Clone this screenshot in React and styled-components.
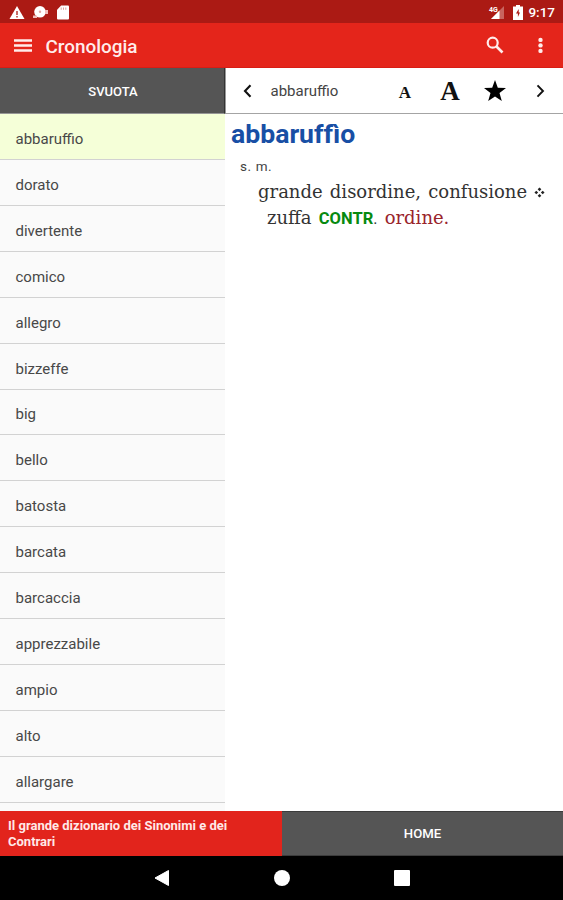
import React, { useState } from 'react';
import styled, { createGlobalStyle } from 'styled-components';

const GlobalStyle = createGlobalStyle`
  * {
    box-sizing: border-box;
  }

  body {
    margin: 0;
    background: #ffffff;
    font-family: Roboto, sans-serif;
  }

  button {
    border: none;
    padding: 0;
    background: none;
    font-family: inherit;
    color: inherit;
    cursor: pointer;
  }

  svg {
    display: block;
  }
`;

// Styled components
const Screen = styled.div`
  width: 563px;
  height: 900px;
  display: flex;
  flex-direction: column;
  overflow: hidden;
`;

const StatusBar = styled.div`
  height: 23px;
  display: flex;
  align-items: center;
  justify-content: space-between;
  padding: 1px 8px 0 9px;
  background-color: #ab1a14;
  color: #ffffff;
`;

const StatusGroup = styled.div`
  display: flex;
  align-items: center;
  gap: ${props => props.$gap}px;
`;

const Clock = styled.span`
  font-size: 13.5px;
  line-height: 22px;
  font-weight: 500;
  margin-left: -3px;
`;

const AppBar = styled.header`
  height: 45px;
  display: flex;
  align-items: center;
  padding: 0 13px 0 14px;
  background-color: #e4251b;
  border-bottom: 1px solid #d81d15;
  color: #ffeceb;
`;

const Title = styled.h1`
  flex: 1;
  margin: 2px 0 0 13.5px;
  font-size: 18.9px;
  font-weight: 500;
`;

const BarButton = styled.button`
  margin-left: ${props => props.$left || 0}px;
`;

const Content = styled.main`
  height: 743px;
  display: flex;
`;

const Sidebar = styled.aside`
  width: 225px;
  background-color: #fafafa;
`;

const ClearButton = styled.button`
  display: block;
  width: 225px;
  height: 46px;
  background-color: #555555;
  border-right: 1px solid #333333;
  border-bottom: 1px solid #969696;
  padding: 2px 0 0 2px;
  color: #ffffff;
  font-size: 13px;
  font-weight: 500;
`;

const WordList = styled.ul`
  list-style: none;
  margin: 0;
  padding: 0;
`;

const WordItem = styled.li`
  height: 45.93px;
  display: flex;
  align-items: center;
  padding: 5px 0 0 15.5px;
  background-color: ${props => (props.$active ? '#f5ffd8' : '#fafafa')};
  border-bottom: 1px solid #d2d2d2;
  color: #484848;
  font-size: 15px;
  cursor: pointer;
`;

const Detail = styled.section`
  flex: 1;
  background-color: #ffffff;
`;

const Toolbar = styled.div`
  height: 46px;
  display: flex;
  align-items: center;
  padding: 0 18px 0 17px;
  border-left: 1px solid #999999;
  border-bottom: 1.5px solid #a4a4a4;
  color: #111111;
`;

const CurrentWord = styled.span`
  flex: 1;
  margin: 1px 0 0 18.5px;
  font-size: 15px;
  color: #444444;
`;

const FontSizeButton = styled.button`
  width: ${props => props.$width}px;
  height: 34px;
  margin-left: ${props => props.$left || 0}px;
  padding-top: ${props => props.$drop || 0}px;
  font-family: 'Liberation Serif', serif;
  font-size: ${props => props.$size}px;
  line-height: 28px;
  font-weight: 700;
`;

const Entry = styled.article`
  padding: 4px 0 0 6px;
`;

const Headword = styled.h2`
  margin: 0;
  font-size: 26.6px;
  line-height: 31px;
  font-weight: 700;
  color: #184fa5;
`;

const Grammar = styled.p`
  margin: 8px 0 0 9px;
  font-size: 13.5px;
  line-height: 18px;
  letter-spacing: 0.6px;
  color: #444444;
`;

const Meaning = styled.p`
  margin: 4px 0 0 36px;
  text-indent: -9px;
  font-family: 'DejaVu Serif', serif;
  font-size: 18px;
  line-height: 26px;
  word-spacing: 1.5px;
  white-space: nowrap;
  color: #333333;
`;

const Diamonds = styled.svg`
  && {
    display: inline-block;
  }
  margin-left: 7px;
`;

const ContraryLabel = styled.span`
  font-family: Roboto, sans-serif;
  font-size: 16.5px;
  font-weight: 700;
  color: #078a10;
`;

const Dot = styled.span`
  font-family: Roboto, sans-serif;
  font-size: 16px;
`;

const Contrary = styled.span`
  color: #99242b;
`;

const Footer = styled.footer`
  height: 45px;
  display: flex;
  color: #ffffff;
`;

const BookName = styled.div`
  width: 282px;
  padding: 7px 40px 0 8px;
  background-color: #e2241c;
  font-size: 13px;
  line-height: 15.5px;
  font-weight: 700;
  color: #ffe9e8;
`;

const HomeButton = styled.button`
  flex: 1;
  background-color: #555555;
  border-top: 1px solid #3c3c3c;
  border-bottom: 1px solid #3c3c3c;
  font-size: 13.2px;
  font-weight: 500;
`;

const NavBar = styled.nav`
  height: 44px;
  display: flex;
  align-items: center;
  justify-content: center;
  gap: 104px;
  background-color: #000000;
`;

const words = [
  'abbaruffio',
  'dorato',
  'divertente',
  'comico',
  'allegro',
  'bizzeffe',
  'big',
  'bello',
  'batosta',
  'barcata',
  'barcaccia',
  'apprezzabile',
  'ampio',
  'alto',
  'allargare',
];

const SignalLabel = styled.text`
  font-family: Roboto, sans-serif;
  font-size: 7px;
  font-weight: 700;
  fill: #ffffff;
`;

const StatusIcons = () => (
  <StatusGroup $gap={8}>
    <svg width="16" height="15" viewBox="0 0 16 15">
      <path d="M8 1 15.5 14H.5Z" fill="#fff" />
      <path d="M8 6v4M8 11v1.5" stroke="#ab1a14" strokeWidth="1.3" />
    </svg>
    <svg width="16" height="15" viewBox="0 0 16 15">
      <circle cx="7" cy="6.8" r="5.8" fill="#fff" />
      <path d="M0 10.5h4v2.5H0ZM12 5h3v4h-3Z" fill="#f0bdba" />
      <circle cx="7" cy="6.8" r="1.2" fill="#e3a9a6" />
    </svg>
    <svg width="12" height="15" viewBox="0 0 12 15">
      <path d="M4.2.5H11q1 0 1 1v12q0 1-1 1H1q-1 0-1-1V4.8Z" fill="#fff" />
      <path d="M4.2 2.5v2.3M6.5 2.5v2.3M8.8 2.5v2.3" stroke="#dfa09c" />
    </svg>
  </StatusGroup>
);

const SystemIcons = () => (
  <StatusGroup $gap={8}>
    <svg width="18" height="15" viewBox="0 0 18 15">
      <path d="M17 1v13H4Z" fill="#c8655f" />
      <path d="M12.5 5.5V14H4Z" fill="#fff" />
      <SignalLabel x="2" y="7">4G</SignalLabel>
    </svg>
    <svg width="10" height="15" viewBox="0 0 10 15">
      <path d="M3 0h4v1.5h3V15H0V1.5h3Z" fill="#fff" />
      <path d="M5.7 4 3 8.5h1.9V12L7 7.5H5.7Z" fill="#ab1a14" />
    </svg>
    <Clock>9:17</Clock>
  </StatusGroup>
);

const App = () => {
  const [selected, setSelected] = useState(0);

  return (
    <Screen>
      <GlobalStyle />
      <StatusBar>
        <StatusIcons />
        <SystemIcons />
      </StatusBar>
      <AppBar>
        <BarButton aria-label="Menu">
          <svg width="18" height="14" viewBox="0 0 18 14">
            <path d="M0 2.5h18M0 7.5h18M0 12.5h18" stroke="currentColor" strokeWidth="2.4" />
          </svg>
        </BarButton>
        <Title>Cronologia</Title>
        <BarButton aria-label="Cerca">
          <svg width="18" height="18" viewBox="0 0 18 18" fill="none" stroke="currentColor">
            <circle cx="6.7" cy="6.7" r="5" strokeWidth="2.2" />
            <path d="m10.5 10.5 6 6" strokeWidth="2.6" />
          </svg>
        </BarButton>
        <BarButton $left={26} aria-label="Altro">
          <svg width="20" height="18" viewBox="0 0 20 18" fill="currentColor">
            <circle cx="10.5" cy="3.9" r="2.2" />
            <circle cx="10.5" cy="9.4" r="2.2" />
            <circle cx="10.5" cy="14.9" r="2.2" />
          </svg>
        </BarButton>
      </AppBar>
      <Content>
        <Sidebar>
          <ClearButton>SVUOTA</ClearButton>
          <WordList>
            {words.map((word, index) => (
              <WordItem key={word} $active={index === selected} onClick={() => setSelected(index)}>
                {word}
              </WordItem>
            ))}
          </WordList>
        </Sidebar>
        <Detail>
          <Toolbar>
            <BarButton aria-label="Precedente">
              <svg width="9" height="14" viewBox="0 0 9 14" fill="none">
                <path d="M7.5 1.3 2 7l5.5 5.7" stroke="currentColor" strokeWidth="2.1" />
              </svg>
            </BarButton>
            <CurrentWord>{words[selected]}</CurrentWord>
            <FontSizeButton $width={18} $size={17} $drop={4}>A</FontSizeButton>
            <FontSizeButton $width={24} $size={27} $left={24}>A</FontSizeButton>
            <BarButton $left={21} aria-label="Preferito">
              <svg width="24" height="24" viewBox="0 0 24 24">
                <path d="m12 1 2.8 7.8 8.2.2-6.5 5.1 2.3 8L12 17.4l-6.8 4.7 2.3-8L1 9l8.2-.2Z" fill="#000" />
              </svg>
            </BarButton>
            <BarButton $left={29} aria-label="Successivo">
              <svg width="9" height="14" viewBox="0 0 9 14" fill="none">
                <path d="M1.5 1.3 7 7l-5.5 5.7" stroke="currentColor" strokeWidth="1.9" />
              </svg>
            </BarButton>
          </Toolbar>
          <Entry>
            <Headword>abbaruffìo</Headword>
            <Grammar>s. m.</Grammar>
            <Meaning>
              grande disordine, confusione
              <Diamonds width="11" height="11" viewBox="0 0 12 12">
                <path d="m6 .5 2 2-2 2-2-2ZM6 7.5l2 2-2 2-2-2ZM2.5 4l2 2-2 2-2-2ZM9.5 4l2 2-2 2-2-2Z" fill="#222" />
              </Diamonds>
              <br />
              zuffa <ContraryLabel>CONTR</ContraryLabel><Dot>.</Dot> <Contrary>ordine.</Contrary>
            </Meaning>
          </Entry>
        </Detail>
      </Content>
      <Footer>
        <BookName>Il grande dizionario dei Sinonimi e dei Contrari</BookName>
        <HomeButton>HOME</HomeButton>
      </Footer>
      <NavBar>
        <svg width="16" height="16" viewBox="0 0 16 16">
          <path d="M14.5.5v15L1 8Z" fill="#fff" stroke="#fff" strokeLinejoin="round" />
        </svg>
        <svg width="16" height="16" viewBox="0 0 16 16">
          <circle cx="8" cy="8" r="8" fill="#fff" />
        </svg>
        <svg width="16" height="16" viewBox="0 0 16 16">
          <rect width="16" height="16" rx="1" fill="#fff" />
        </svg>
      </NavBar>
    </Screen>
  );
};

export default App;
